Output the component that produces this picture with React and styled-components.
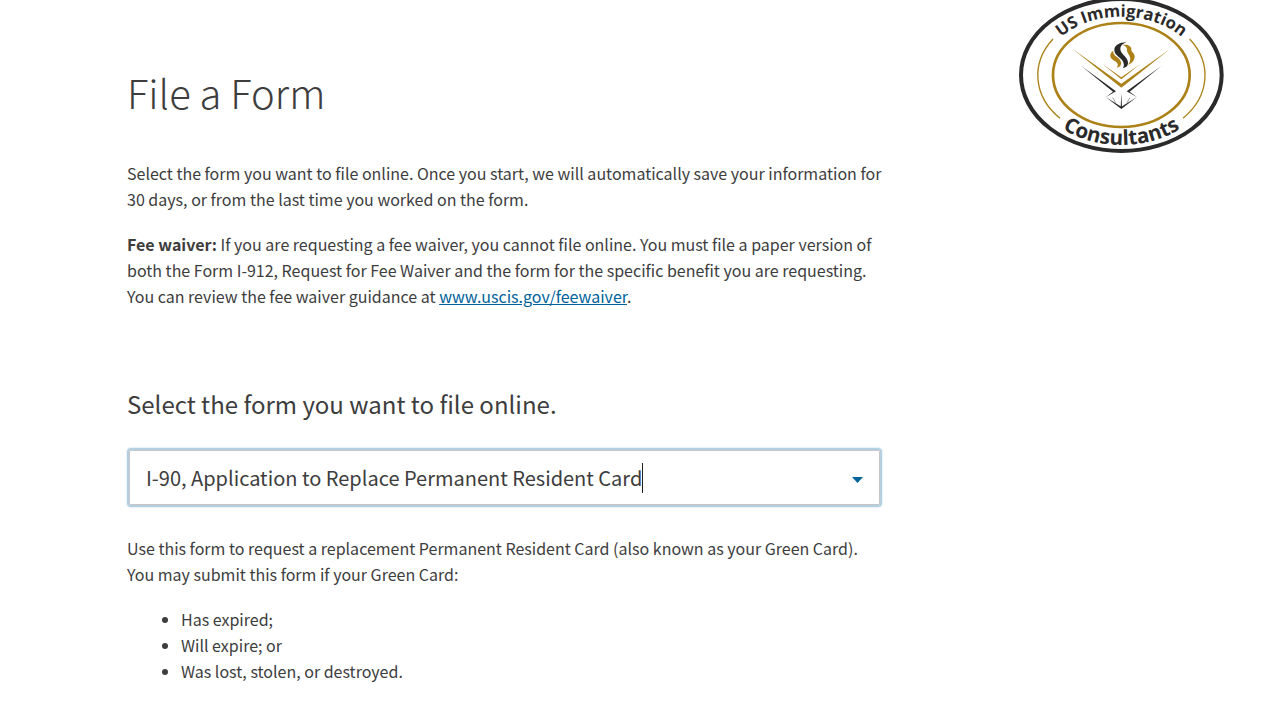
import React, { useState } from "react";
import styled, { createGlobalStyle } from "styled-components";

const GlobalStyle = createGlobalStyle`
  *, *::before, *::after { box-sizing: border-box; }
  body {
    margin: 0;
    background: #fff;
    color: #3d3d3e;
    font-family: "Noto Sans CJK SC", "Open Sans", sans-serif;
    font-size: 16px;
    line-height: 26px;
  }
`;

const Page = styled.div`
  display: flex;
  align-items: flex-start;
  justify-content: space-between;
  gap: 24px;
  padding: 0 37px 24px 127px;
`;

const Main = styled.main`
  flex: 1 1 auto;
  max-width: 755px;
  padding-top: 62px;
`;

const Title = styled.h1`
  margin: 0 0 38px;
  font-size: 40px;
  font-weight: 200;
  line-height: 60px;
`;

const Paragraph = styled.p`
  margin: 0 0 19px;
`;

const Link = styled.a`
  color: #00639a;
  text-decoration: underline;
`;

const Field = styled.section`
  margin-top: 75px;
`;

const FieldLabel = styled.label`
  display: block;
  margin-bottom: 24px;
  font-size: 24px;
  line-height: 40px;
`;

const ComboBox = styled.div`
  display: flex;
  align-items: center;
  height: 59px;
  margin-bottom: 28px;
  padding: 0 17px;
  border: 2px solid #b4cfe0;
  border-radius: 4px;
  box-shadow: inset 0 0 0 1px #c6c6c6, 0 0 2px #b5d2e4;
`;

const ComboInput = styled.input`
  field-sizing: content;
  min-width: 0;
  padding: 0;
  border: 0;
  outline: 0;
  background: transparent;
  color: inherit;
  font: inherit;
  font-size: 20px;
  line-height: 32px;
  caret-color: transparent;
`;

const Caret = styled.span`
  flex: none;
  width: 1px;
  height: 30px;
  background: #222;
`;

const ToggleButton = styled.button`
  display: flex;
  margin-left: auto;
  padding: 4px 0 0;
  border: 0;
  background: transparent;
  color: #00639a;
`;

const BulletList = styled.ul`
  margin: 0;
  padding-left: 54px;
`;

const LogoArt = styled.svg`
  flex: none;
  display: block;
  width: 205px;
  height: 153px;
`;

const LogoText = styled.text`
  font-family: "Open Sans", sans-serif;
  font-size: ${({ $size }) => $size}px;
  font-weight: 700;
  fill: #2b2a2b;
`;

const GOLD = "#ab8118";
const INK = "#2b2a2b";

function Logo() {
  return (
    <LogoArt viewBox="27 0 615 459" role="img" aria-label="US Immigration Consultants">
      <defs>
        <path id="arcTop" d="M96 225 A238 175 0 0 1 572 225" />
        <path id="arcBottom" d="M58 225 A276 210 0 0 0 610 225" />
      </defs>
      <ellipse cx="334" cy="225" rx="301" ry="228" fill="#fff" stroke={INK} strokeWidth="12" />
      <ellipse cx="334" cy="225" rx="205" ry="156" fill="none" stroke={GOLD} strokeWidth="8" />
      <path
        d="M129 117 A251 190 0 0 0 150 355 M539 117 A251 190 0 0 1 519 355"
        fill="none"
        stroke={GOLD}
        strokeWidth="4"
      />
      <LogoText $size={50} textAnchor="middle">
        <textPath href="#arcTop" startOffset="50%">US Immigration</textPath>
      </LogoText>
      <LogoText $size={62} textAnchor="middle">
        <textPath href="#arcBottom" startOffset="50%">Consultants</textPath>
      </LogoText>
      <g fill={GOLD}>
        <path d="M188 147 L334 251 L480 147 L334 263 Z" />
        <path d="M278 193 L334 232 L390 193 L334 238 Z" />
        <path d="M310 152 C308 160 314 166 322 172 C332 180 336 188 332 196 C330 200 326 202 320 203 C326 196 324 190 316 184 C306 178 300 174 301 164 C302 158 306 154 310 152 Z" />
        <path d="M338 135 C352 132 366 138 364 150 C364 156 374 160 374 170 C373 182 366 190 354 194 C360 188 362 180 360 172 C357 162 350 158 351 148 C351 142 346 137 338 135 Z" />
      </g>
      <g fill={INK}>
        <path d="M350 127 C338 130 328 140 332 152 C336 164 354 172 354 188 C354 196 350 202 339 204 C344 198 342 188 336 180 C326 168 313 164 313 149 C313 136 330 126 350 127 Z" />
        <path d="M214 198 L318 274 L287 292 L309 275 Z" />
        <path d="M454 198 L350 274 L381 292 L359 275 Z" />
        <path d="M287 291 L334 320 L381 291 L334 327 Z" />
        <path d="M334 280 L336 322 L332 322 Z" />
      </g>
      <path d="M308 293 L317 308 M360 293 L351 308" stroke={INK} strokeWidth="2" opacity="0.7" />
    </LogoArt>
  );
}

export default function App() {
  const [form, setForm] = useState("I-90, Application to Replace Permanent Resident Card");
  return (
    <>
      <GlobalStyle />
      <Page>
        <Main>
          <Title>File a Form</Title>
          <Paragraph>
            Select the form you want to file online. Once you start, we will automatically save your
            information for 30 days, or from the last time you worked on the form.
          </Paragraph>
          <Paragraph>
            <strong>Fee waiver:</strong> If you are requesting a fee waiver, you cannot file online. You
            must file a paper version of both the Form I-912, Request for Fee Waiver and the form for the
            specific benefit you are requesting. You can review the fee waiver guidance at{" "}
            <Link href="https://www.uscis.gov/feewaiver">www.uscis.gov/feewaiver</Link>.
          </Paragraph>
          <Field>
            <FieldLabel htmlFor="form-select">Select the form you want to file online.</FieldLabel>
            <ComboBox>
              <ComboInput
                id="form-select"
                role="combobox"
                aria-expanded="false"
                value={form}
                onChange={(event) => setForm(event.target.value)}
              />
              <Caret aria-hidden="true" />
              <ToggleButton type="button" aria-label="Show forms">
                <svg width="11" height="6" viewBox="0 0 11 6" aria-hidden="true">
                  <path d="M0 0 H11 L5.5 6 Z" fill="currentColor" />
                </svg>
              </ToggleButton>
            </ComboBox>
          </Field>
          <Paragraph>
            Use this form to request a replacement Permanent Resident Card (also known as your Green
            Card). You may submit this form if your Green Card:
          </Paragraph>
          <BulletList>
            <li>Has expired;</li>
            <li>Will expire; or</li>
            <li>Was lost, stolen, or destroyed.</li>
          </BulletList>
        </Main>
        <Logo />
      </Page>
    </>
  );
}
